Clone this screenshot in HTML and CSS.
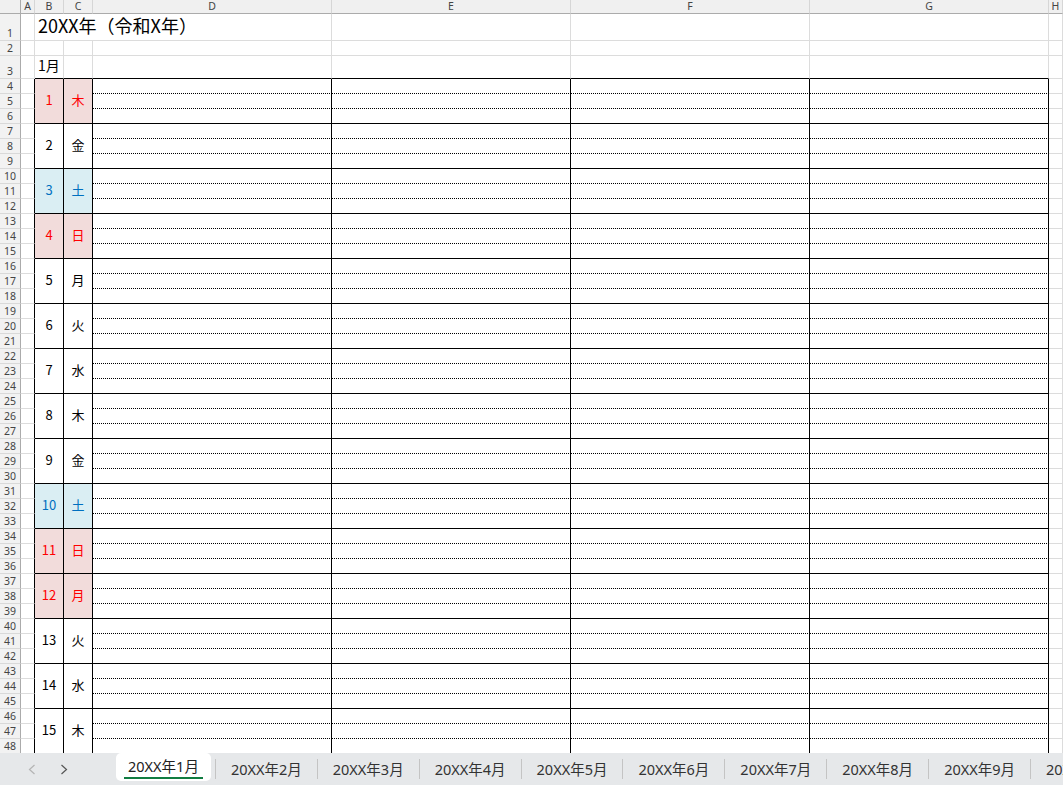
FILE: index.html
```html
<!DOCTYPE html>
<html lang="ja">
<head>
  <meta charset="UTF-8" />
  <meta name="viewport" content="width=device-width, initial-scale=1.0" />
  <title>20XX年 スケジュール</title>
  <link rel="stylesheet" href="styles.css">
</head>
<body>
  <div class="app">
    <div class="sheet" id="sheet"></div>

    <div class="tab-bar">
      <div class="tab-nav">
        <span class="nav-btn disabled">
          <svg width="8" height="11" viewBox="0 0 8 11"><polyline points="6.5,1 1.5,5.5 6.5,10" /></svg>
        </span>
        <span class="nav-btn">
          <svg width="8" height="11" viewBox="0 0 8 11"><polyline points="1.5,1 6.5,5.5 1.5,10" /></svg>
        </span>
      </div>
      <div class="tabs" id="tabs"></div>
    </div>
  </div>

  <script>
    const columns = ['A', 'B', 'C', 'D', 'E', 'F', 'G', 'H'];

    // day, weekday, type (holiday = red, sat = blue)
    const days = [
      [1, '木', 'holiday'], [2, '金', ''], [3, '土', 'sat'], [4, '日', 'holiday'],
      [5, '月', ''], [6, '火', ''], [7, '水', ''], [8, '木', ''],
      [9, '金', ''], [10, '土', 'sat'], [11, '日', 'holiday'], [12, '月', 'holiday'],
      [13, '火', ''], [14, '水', ''], [15, '木', ''],
    ];

    const sheet = document.getElementById('sheet');
    let html = '';

    const cell = (cls, text = '') => `<div class="${cls}">${text}</div>`;

    // column header row
    html += cell('corner');
    columns.forEach(c => html += cell('col-head', c));

    // row 1: title spills over B..D
    html += cell('row-head', '<span>1</span>');
    html += cell('grid-cell');
    html += cell('grid-cell title', '20XX年（令和X年）');
    html += cell('grid-cell') + cell('grid-cell') + cell('grid-cell') + cell('grid-cell');

    // row 2: empty
    html += cell('row-head', '<span>2</span>');
    columns.forEach(() => html += cell('grid-cell'));

    // row 3: month label, bottom edge of the calendar table
    html += cell('row-head', '<span>3</span>');
    html += cell('grid-cell');
    html += cell('grid-cell top-edge month', '1月');
    for (let i = 0; i < 5; i++) html += cell('grid-cell top-edge');
    html += cell('grid-cell');

    // day blocks, 3 rows each
    for (let row = 4; row <= 48; row++) {
      const idx = Math.floor((row - 4) / 3);
      const part = (row - 4) % 3;
      html += cell('row-head', `<span>${row}</span>`);
      html += cell('grid-cell table-left');

      if (part === 0 && days[idx]) {
        const [day, wd, type] = days[idx];
        html += cell(`day ${type}`, day);
        html += cell(`day ${type}`, wd);
      }

      const line = part === 2 ? 'memo solid' : 'memo dotted';
      for (let i = 0; i < 4; i++) html += cell(line);
      html += cell('grid-cell');
    }

    sheet.innerHTML = html;

    // sheet tabs
    const tabs = document.getElementById('tabs');
    let tabHTML = '<div class="tab active"><span>20XX年1月</span></div>';
    for (let m = 2; m <= 12; m++) {
      tabHTML += `<div class="tab">20XX年${m}月</div>`;
    }
    tabs.innerHTML = tabHTML;
  </script>
</body>
</html>
```

FILE: styles.css
```css
* {
  box-sizing: border-box;
}

body {
  margin: 0;
  font-family: "Noto Sans CJK JP", "Noto Sans", sans-serif;
  color: #000;
  background-color: #fff;
  overflow: hidden;
}

.app {
  display: flex;
  flex-direction: column;
  width: 1063px;
  height: 785px;
}

/* Spreadsheet grid */
.sheet {
  display: grid;
  grid-template-columns: 21px 14px 29px 29px repeat(4, 239px) 1fr;
  grid-template-rows: 14px 27px 15px 23px;
  grid-auto-rows: 15px;
  height: 753px;
  overflow: hidden;
  flex-shrink: 0;
}

.corner {
  background-color: #f0f0f0;
  border-right: 1px solid #ababab;
  border-bottom: 1px solid #ababab;
}

.col-head {
  background-color: #f0f0f0;
  border-right: 1px solid #d6d6d6;
  border-bottom: 1px solid #ababab;
  font-family: "Noto Sans", sans-serif;
  font-size: 10.5px;
  line-height: 13px;
  color: #444;
  text-align: center;
}

.row-head {
  display: flex;
  align-items: flex-end;
  justify-content: center;
  background-color: #f2f2f2;
  border-right: 1px solid #ababab;
  border-bottom: 1px solid #d9d9d9;
  font-family: "Noto Sans", sans-serif;
  font-size: 10.5px;
  line-height: 14px;
  color: #444;
}

.grid-cell {
  border-right: 1px solid #dcdcdc;
  border-bottom: 1px solid #dcdcdc;
}

.title {
  grid-column: span 3;
  display: flex;
  align-items: flex-end;
  padding: 0 0 4px 3px;
  font-size: 18px;
  line-height: 22px;
  white-space: nowrap;
}

.month {
  display: flex;
  align-items: flex-end;
  padding: 0 0 4px 3px;
  font-size: 14px;
  line-height: 18px;
  white-space: nowrap;
}

.top-edge {
  border-bottom-color: #000;
}

.table-left {
  border-right-color: #000;
}

/* Calendar table */
.day {
  grid-row: span 3;
  display: flex;
  align-items: center;
  justify-content: center;
  border-right: 1px solid #000;
  border-bottom: 1px solid #000;
  font-size: 13px;
  line-height: 1;
  padding-bottom: 3px;
}

.day.holiday {
  background-color: #f2dcdb;
  color: #ff0000;
}

.day.sat {
  background-color: #daeef3;
  color: #0070c0;
}

.memo {
  border-right: 1px solid #000;
}

.memo.dotted {
  border-bottom: 1px dotted #000;
}

.memo.solid {
  border-bottom: 1px solid #000;
}

/* Sheet tabs */
.tab-bar {
  display: flex;
  height: 32px;
  background-color: #e6e8ea;
  overflow: hidden;
}

.tab-nav {
  display: flex;
  align-items: center;
  flex-shrink: 0;
  width: 116px;
  padding-left: 28px;
  gap: 24px;
}

.nav-btn {
  display: flex;
}

.nav-btn svg polyline {
  fill: none;
  stroke: #555;
  stroke-width: 1.2;
}

.nav-btn.disabled svg polyline {
  stroke: #b4b4b4;
}

.tabs {
  display: flex;
  align-items: center;
  white-space: nowrap;
}

.tab {
  flex-shrink: 0;
  height: 20px;
  padding: 0 15px;
  border-left: 1px solid #c4c4c4;
  font-family: "Noto Sans", "Noto Sans CJK JP", sans-serif;
  font-size: 14.5px;
  line-height: 20px;
  color: #333;
}

.tab.active {
  align-self: flex-start;
  height: 28px;
  margin-right: 4px;
  padding: 0 8px;
  border-left: none;
  border-radius: 5px;
  background-color: #fff;
  color: #222;
  line-height: 26px;
}

.tab.active span {
  display: inline-block;
  padding: 0 4px;
  line-height: 21px;
  border-bottom: 2px solid #107c41;
}
```
